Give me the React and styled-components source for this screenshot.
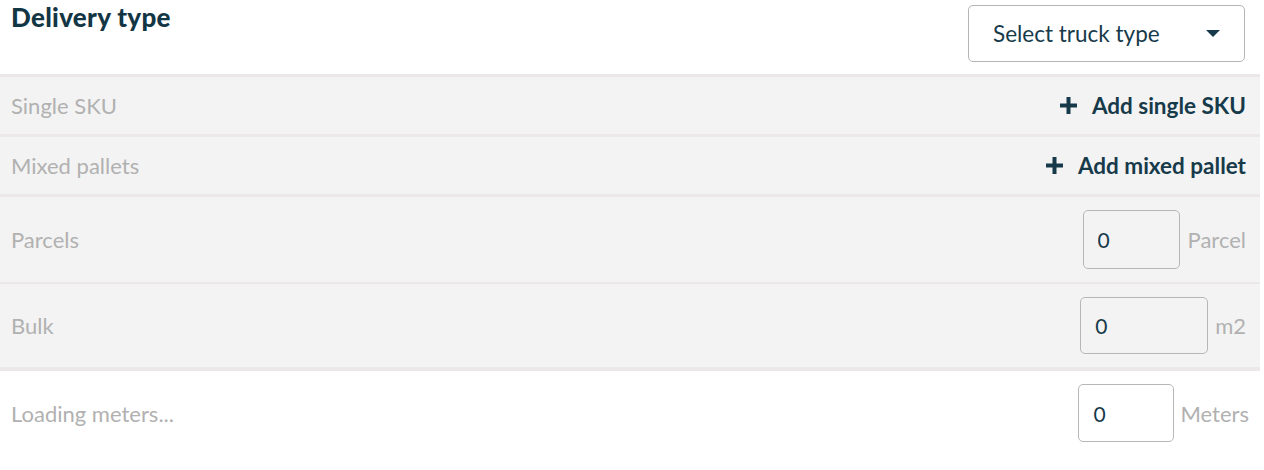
import React from 'react';
import styled, { createGlobalStyle } from 'styled-components';

const GlobalStyle = createGlobalStyle`
    body {
        margin: 0;
        background: #fff;
        font-family: Lato, "Open Sans", sans-serif;
    }
`;

const Panel = styled.div`
    width: 1260px;
    background: #fff;
`;

const Header = styled.div`
    height: 74px;
    display: flex;
    justify-content: space-between;
    align-items: flex-start;
    padding: 0 15px 0 11px;
    box-sizing: border-box;
`;

const Title = styled.h2`
    margin: 1px 0 0;
    font-size: 26px;
    font-weight: 900;
    color: #133645;
    letter-spacing: 0.3px;
`;

const Select = styled.button`
    margin-top: 5px;
    width: 277px;
    height: 57px;
    display: flex;
    align-items: center;
    justify-content: space-between;
    padding: 0 24px 0 24px;
    background: #fff;
    border: 1px solid #b5b5b5;
    border-radius: 5px;
    font-family: inherit;
    font-size: 22.5px;
    color: #173a4a;
    cursor: pointer;
`;

const Caret = styled.span`
    width: 0;
    height: 0;
    border-left: 7px solid transparent;
    border-right: 7px solid transparent;
    border-top: 7px solid #173a4a;
`;

const Row = styled.div`
    height: ${p => p.$h}px;
    display: flex;
    align-items: center;
    justify-content: space-between;
    padding: 0 14px 0 11px;
    background: ${p => (p.$white ? '#fff' : '#f3f3f3')};
    border-top: ${p => p.$line}px solid #ece8e9;
`;

const Label = styled.span`
    font-size: 22px;
    color: #b1b1b1;
`;

const AddLink = styled.a`
    display: flex;
    align-items: center;
    gap: 15px;
    font-size: 22.5px;
    font-weight: 700;
    color: #173a4a;
    cursor: pointer;
`;

const Field = styled.div`
    display: flex;
    align-items: center;
    gap: ${p => p.$gap}px;
    margin-right: ${p => p.$mr || 0}px;
`;

const NumInput = styled.input`
    width: ${p => p.$w}px;
    height: ${p => p.$hh}px;
    box-sizing: border-box;
    border: 1px solid #b7b7b7;
    border-radius: 5px;
    background: transparent;
    padding: 0 14px;
    font-family: inherit;
    font-size: 21px;
    color: #173a4a;
    outline: none;
`;

const Unit = styled.span`
    font-size: 22px;
    color: #b1b1b1;
`;

const Plus = () => (
    <svg width="17" height="17" viewBox="0 0 17 17">
        <path d="M8.5 0v17M0 8.5h17" stroke="#173a4a" strokeWidth="4" />
    </svg>
);

const rows = [
    { label: 'Single SKU', add: 'Add single SKU', h: 57, line: 3 },
    { label: 'Mixed pallets', add: 'Add mixed pallet', h: 57, line: 3 },
    { label: 'Parcels', unit: 'Parcel', w: 97, ih: 59, gap: 8, h: 85, line: 3 },
    { label: 'Bulk', unit: 'm2', w: 128, ih: 57, gap: 7, h: 83, line: 2 },
    { label: 'Loading meters...', unit: 'Meters', w: 96, ih: 58, gap: 6, mr: -3, h: 84, line: 4, white: true },
];

export default function App() {
    return (
        <>
            <GlobalStyle />
            <Panel>
                <Header>
                    <Title>Delivery type</Title>
                    <Select>
                        Select truck type
                        <Caret />
                    </Select>
                </Header>
                {rows.map(r => (
                    <Row key={r.label} $h={r.h} $line={r.line} $white={r.white}>
                        <Label>{r.label}</Label>
                        {r.add ? (
                            <AddLink>
                                <Plus />
                                {r.add}
                            </AddLink>
                        ) : (
                            <Field $gap={r.gap} $mr={r.mr}>
                                <NumInput $w={r.w} $hh={r.ih} defaultValue="0" />
                                <Unit>{r.unit}</Unit>
                            </Field>
                        )}
                    </Row>
                ))}
            </Panel>
        </>
    );
}
